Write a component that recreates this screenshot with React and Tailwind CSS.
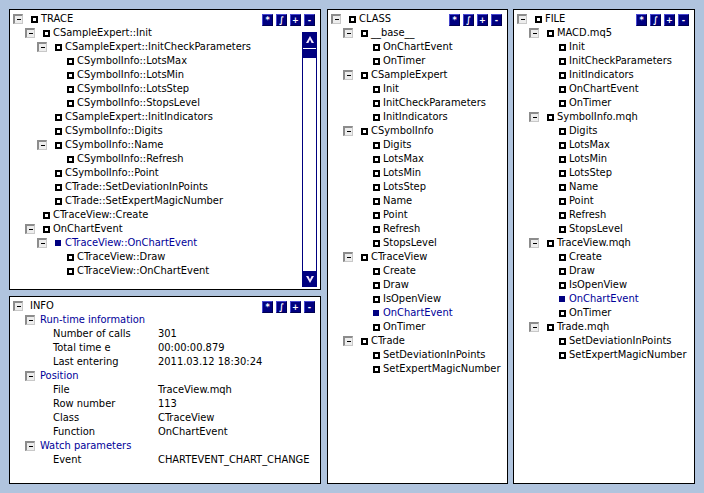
import React from "react";

const boxPad = ["pl-[3px]", "pl-[15px]", "pl-[27px]", "pl-[39px]"];
const leafPad = ["pl-[21px]", "pl-[33px]", "pl-[45px]", "pl-[57px]"];

function Box() {
  return (
    <div className="w-[10px] h-[10px] shrink-0 border-t-2 border-l-2 border-t-[#8c8c8c] border-l-[#8c8c8c] border-r border-b border-r-[#c8c8c8] border-b-[#c8c8c8] bg-[#ededed] flex items-center justify-center">
      <div className="w-[4px] h-[1px] bg-black" />
    </div>
  );
}

function Icon({ hl }) {
  if (hl) return <div className="w-[6px] h-[6px] bg-[#000080] shrink-0 mr-[1px]" />;
  return <div className="w-[7px] h-[7px] border-2 border-black bg-white shrink-0" />;
}

function Btns() {
  return (
    <div className="flex gap-[3px] mt-[2px] mr-[5px] self-start">
      {["*", "∫", "+", "-"].map((c) => (
        <div
          key={c}
          className="w-[11px] h-[12px] bg-[#000080] border-t border-l border-t-[#4848d0] border-l-[#4848d0] border-r border-b border-r-[#000050] border-b-[#000050] text-white text-[9px] font-bold flex items-center justify-center leading-none"
        >
          {c}
        </div>
      ))}
    </div>
  );
}

function TreeRow({ l, t, box, hl }) {
  return (
    <div className={`flex items-center h-[14px] whitespace-nowrap ${box ? boxPad[l] : leafPad[l]}`}>
      {box && <Box />}
      <div className={box ? "ml-[8px] flex" : "flex"}>
        <Icon hl={hl} />
      </div>
      <span className={`ml-[3px] leading-[14px] ${hl ? "text-[#000099]" : "text-black"}`}>{t}</span>
    </div>
  );
}

function HeaderRow({ t }) {
  return (
    <div className="flex justify-between">
      <TreeRow l={0} t={t} box />
      <Btns />
    </div>
  );
}

const trace = [
  { l: 1, t: "CSampleExpert::Init", box: true },
  { l: 2, t: "CSampleExpert::InitCheckParameters", box: true },
  { l: 3, t: "CSymbolInfo::LotsMax" },
  { l: 3, t: "CSymbolInfo::LotsMin" },
  { l: 3, t: "CSymbolInfo::LotsStep" },
  { l: 3, t: "CSymbolInfo::StopsLevel" },
  { l: 2, t: "CSampleExpert::InitIndicators" },
  { l: 2, t: "CSymbolInfo::Digits" },
  { l: 2, t: "CSymbolInfo::Name", box: true },
  { l: 3, t: "CSymbolInfo::Refresh" },
  { l: 2, t: "CSymbolInfo::Point" },
  { l: 2, t: "CTrade::SetDeviationInPoints" },
  { l: 2, t: "CTrade::SetExpertMagicNumber" },
  { l: 1, t: "CTraceView::Create" },
  { l: 1, t: "OnChartEvent", box: true },
  { l: 2, t: "CTraceView::OnChartEvent", box: true, hl: true },
  { l: 3, t: "CTraceView::Draw" },
  { l: 3, t: "CTraceView::OnChartEvent" },
];

const cls = [
  { l: 1, t: "__base__", box: true },
  { l: 2, t: "OnChartEvent" },
  { l: 2, t: "OnTimer" },
  { l: 1, t: "CSampleExpert", box: true },
  { l: 2, t: "Init" },
  { l: 2, t: "InitCheckParameters" },
  { l: 2, t: "InitIndicators" },
  { l: 1, t: "CSymbolInfo", box: true },
  { l: 2, t: "Digits" },
  { l: 2, t: "LotsMax" },
  { l: 2, t: "LotsMin" },
  { l: 2, t: "LotsStep" },
  { l: 2, t: "Name" },
  { l: 2, t: "Point" },
  { l: 2, t: "Refresh" },
  { l: 2, t: "StopsLevel" },
  { l: 1, t: "CTraceView", box: true },
  { l: 2, t: "Create" },
  { l: 2, t: "Draw" },
  { l: 2, t: "IsOpenView" },
  { l: 2, t: "OnChartEvent", hl: true },
  { l: 2, t: "OnTimer" },
  { l: 1, t: "CTrade", box: true },
  { l: 2, t: "SetDeviationInPoints" },
  { l: 2, t: "SetExpertMagicNumber" },
];

const file = [
  { l: 1, t: "MACD.mq5", box: true },
  { l: 2, t: "Init" },
  { l: 2, t: "InitCheckParameters" },
  { l: 2, t: "InitIndicators" },
  { l: 2, t: "OnChartEvent" },
  { l: 2, t: "OnTimer" },
  { l: 1, t: "SymbolInfo.mqh", box: true },
  { l: 2, t: "Digits" },
  { l: 2, t: "LotsMax" },
  { l: 2, t: "LotsMin" },
  { l: 2, t: "LotsStep" },
  { l: 2, t: "Name" },
  { l: 2, t: "Point" },
  { l: 2, t: "Refresh" },
  { l: 2, t: "StopsLevel" },
  { l: 1, t: "TraceView.mqh", box: true },
  { l: 2, t: "Create" },
  { l: 2, t: "Draw" },
  { l: 2, t: "IsOpenView" },
  { l: 2, t: "OnChartEvent", hl: true },
  { l: 2, t: "OnTimer" },
  { l: 1, t: "Trade.mqh", box: true },
  { l: 2, t: "SetDeviationInPoints" },
  { l: 2, t: "SetExpertMagicNumber" },
];

const info = [
  { s: "Run-time information" },
  { k: "Number of calls", v: "301" },
  { k: "Total time e", v: "00:00:00.879" },
  { k: "Last entering", v: "2011.03.12 18:30:24" },
  { s: "Position" },
  { k: "File", v: "TraceView.mqh" },
  { k: "Row number", v: "113" },
  { k: "Class", v: "CTraceView" },
  { k: "Function", v: "OnChartEvent" },
  { s: "Watch parameters" },
  { k: "Event", v: "CHARTEVENT_CHART_CHANGE" },
];

function Scrollbar() {
  return (
    <div className="flex flex-col w-[15px] mt-[6px] mb-[2px] mr-[3px] shrink-0">
      <div className="h-[15px] bg-[#000080] flex items-center justify-center">
        <svg width="8" height="7" viewBox="0 0 8 7">
          <polygon points="4,0 8,7 5.6,7 4,3.6 2.4,7 0,7" fill="#f4e8ff" />
        </svg>
      </div>
      <div className="flex-1 border border-[#000080] bg-white pt-[1px]">
        <div className="h-[9px] bg-[#000080]" />
      </div>
      <div className="h-[15px] bg-[#000080] flex items-center justify-center">
        <svg width="8" height="7" viewBox="0 0 8 7">
          <polygon points="4,7 8,0 5.6,0 4,3.4 2.4,0 0,0" fill="#f4e8ff" />
        </svg>
      </div>
    </div>
  );
}

export default function App() {
  return (
    <div className="w-[704px] h-[493px] bg-[#b0c4de] p-[9px] flex font-['DejaVu_Sans_Condensed','Liberation_Sans',sans-serif] text-[11px] text-black overflow-hidden">
      <div className="w-[312px] flex flex-col shrink-0">
        <div className="h-[281px] bg-white border border-black flex flex-col pt-[2px] overflow-hidden">
          <HeaderRow t="TRACE" />
          <div className="flex flex-1 min-h-0">
            <div className="flex-1 flex flex-col overflow-hidden">
              {trace.map((r, i) => (
                <TreeRow key={i} {...r} />
              ))}
            </div>
            <Scrollbar />
          </div>
        </div>
        <div className="mt-[6px] flex-1 bg-white border border-black pt-[2px] flex flex-col">
          <div className="flex justify-between">
            <div className="flex items-center h-[14px] pl-[3px]">
              <Box />
              <span className="ml-[7px] leading-[14px]">INFO</span>
            </div>
            <Btns />
          </div>
          {info.map((r, i) =>
            r.s ? (
              <div key={i} className="flex items-center h-[14px] pl-[15px]">
                <Box />
                <span className="ml-[5px] leading-[14px] text-[#000099]">{r.s}</span>
              </div>
            ) : (
              <div key={i} className="flex items-center h-[14px] pl-[43px] whitespace-nowrap">
                <span className="w-[105px] shrink-0 leading-[14px]">{r.k}</span>
                <span className="leading-[14px]">{r.v}</span>
              </div>
            )
          )}
        </div>
      </div>
      <div className="ml-[6px] w-[181px] shrink-0 bg-white border border-black pt-[2px] flex flex-col overflow-hidden">
        <HeaderRow t="CLASS" />
        {cls.map((r, i) => (
          <TreeRow key={i} {...r} />
        ))}
      </div>
      <div className="ml-[5px] w-[182px] shrink-0 bg-white border border-black pt-[2px] flex flex-col overflow-hidden">
        <HeaderRow t="FILE" />
        {file.map((r, i) => (
          <TreeRow key={i} {...r} />
        ))}
      </div>
    </div>
  );
}
